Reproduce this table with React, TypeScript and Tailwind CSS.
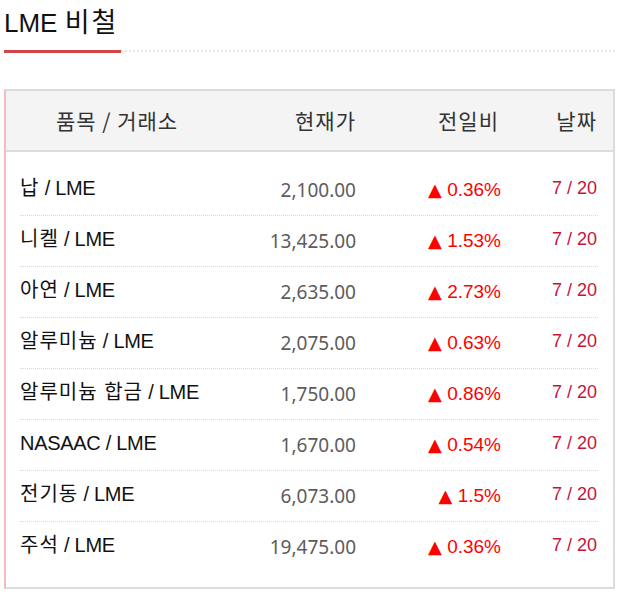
import React from "react";

const rows = [
  { name: "납", price: "2,100.00", pct: "0.36%" },
  { name: "니켈", price: "13,425.00", pct: "1.53%" },
  { name: "아연", price: "2,635.00", pct: "2.73%" },
  { name: "알루미늄", price: "2,075.00", pct: "0.63%" },
  { name: "알루미늄 합금", price: "1,750.00", pct: "0.86%" },
  { name: "NASAAC", price: "1,670.00", pct: "0.54%" },
  { name: "전기동", price: "6,073.00", pct: "1.5%" },
  { name: "주석", price: "19,475.00", pct: "0.36%" },
];

const sans = "font-['Liberation_Sans','Noto_Sans_CJK_KR',sans-serif]";

export default function App() {
  return (
    <div className={`w-[619px] h-[595px] bg-white px-[4px] ${sans}`}>
      <div className="h-[50px] pt-[5px]">
        <h1 className="text-[26px] leading-[36px] text-[#111] font-normal">
          LME <span className="text-[27px] tracking-[2px]">비철</span>
        </h1>
      </div>
      <div className="flex items-start">
        <div className="w-[117px] h-[3px] bg-[#d04545]" />
        <div className="flex-1 border-t-2 border-dotted border-[#e6e6e6]" />
      </div>
      <div className="mt-[36px] border-t-2 border-b-2 border-r-2 border-l-2 border-t-[#dcdcdc] border-b-[#dcdcdc] border-r-[#dcdcdc] border-l-[#f5bcc0]">
        <div className="h-[61px] bg-[#f4f4f4] border-b-2 border-[#dcdcdc] flex items-center pl-[14px] pr-[15px] text-[21px] text-[#333] font-['Noto_Sans_CJK_KR',sans-serif]">
          <div className="flex-1 text-center pr-[12px] tracking-[1px]">품목 / 거래소</div>
          <div className="w-[130px] text-right tracking-[1px]">현재가</div>
          <div className="w-[145px] text-right pr-[2px] tracking-[1px]">전일비</div>
          <div className="w-[97px] text-right pr-[1px] tracking-[1px]">날짜</div>
        </div>
        <div className="pt-[12px] pb-[15px] pl-[14px] pr-[15px]">
          {rows.map((r, i) => (
            <div
              key={i}
              className={`h-[51px] flex items-center pb-[5px] border-t border-dotted ${
                i === 0 ? "border-transparent" : "border-[#d8d8d8]"
              }`}
            >
              <div className="flex-1 text-[20px] text-[#111] leading-none tracking-[-0.3px]">
                <span className={r.name === "NASAAC" ? "" : "tracking-[1px]"}>{r.name}</span> / LME
              </div>
              <div className="w-[130px] text-right text-[19px] leading-none text-[#5c5c5c] pt-[6px] font-['Noto_Sans',sans-serif]">
                {r.price}
              </div>
              <div className="w-[145px] text-right text-[19px] leading-none text-[#f00] pt-[4px]">
                <span className="text-[18px] font-['DejaVu_Sans',sans-serif]">▲</span> {r.pct}
              </div>
              <div className="w-[97px] text-right text-[18px] leading-none text-[#c4143c] pr-[1px]">7 / 20</div>
            </div>
          ))}
        </div>
      </div>
    </div>
  );
}
